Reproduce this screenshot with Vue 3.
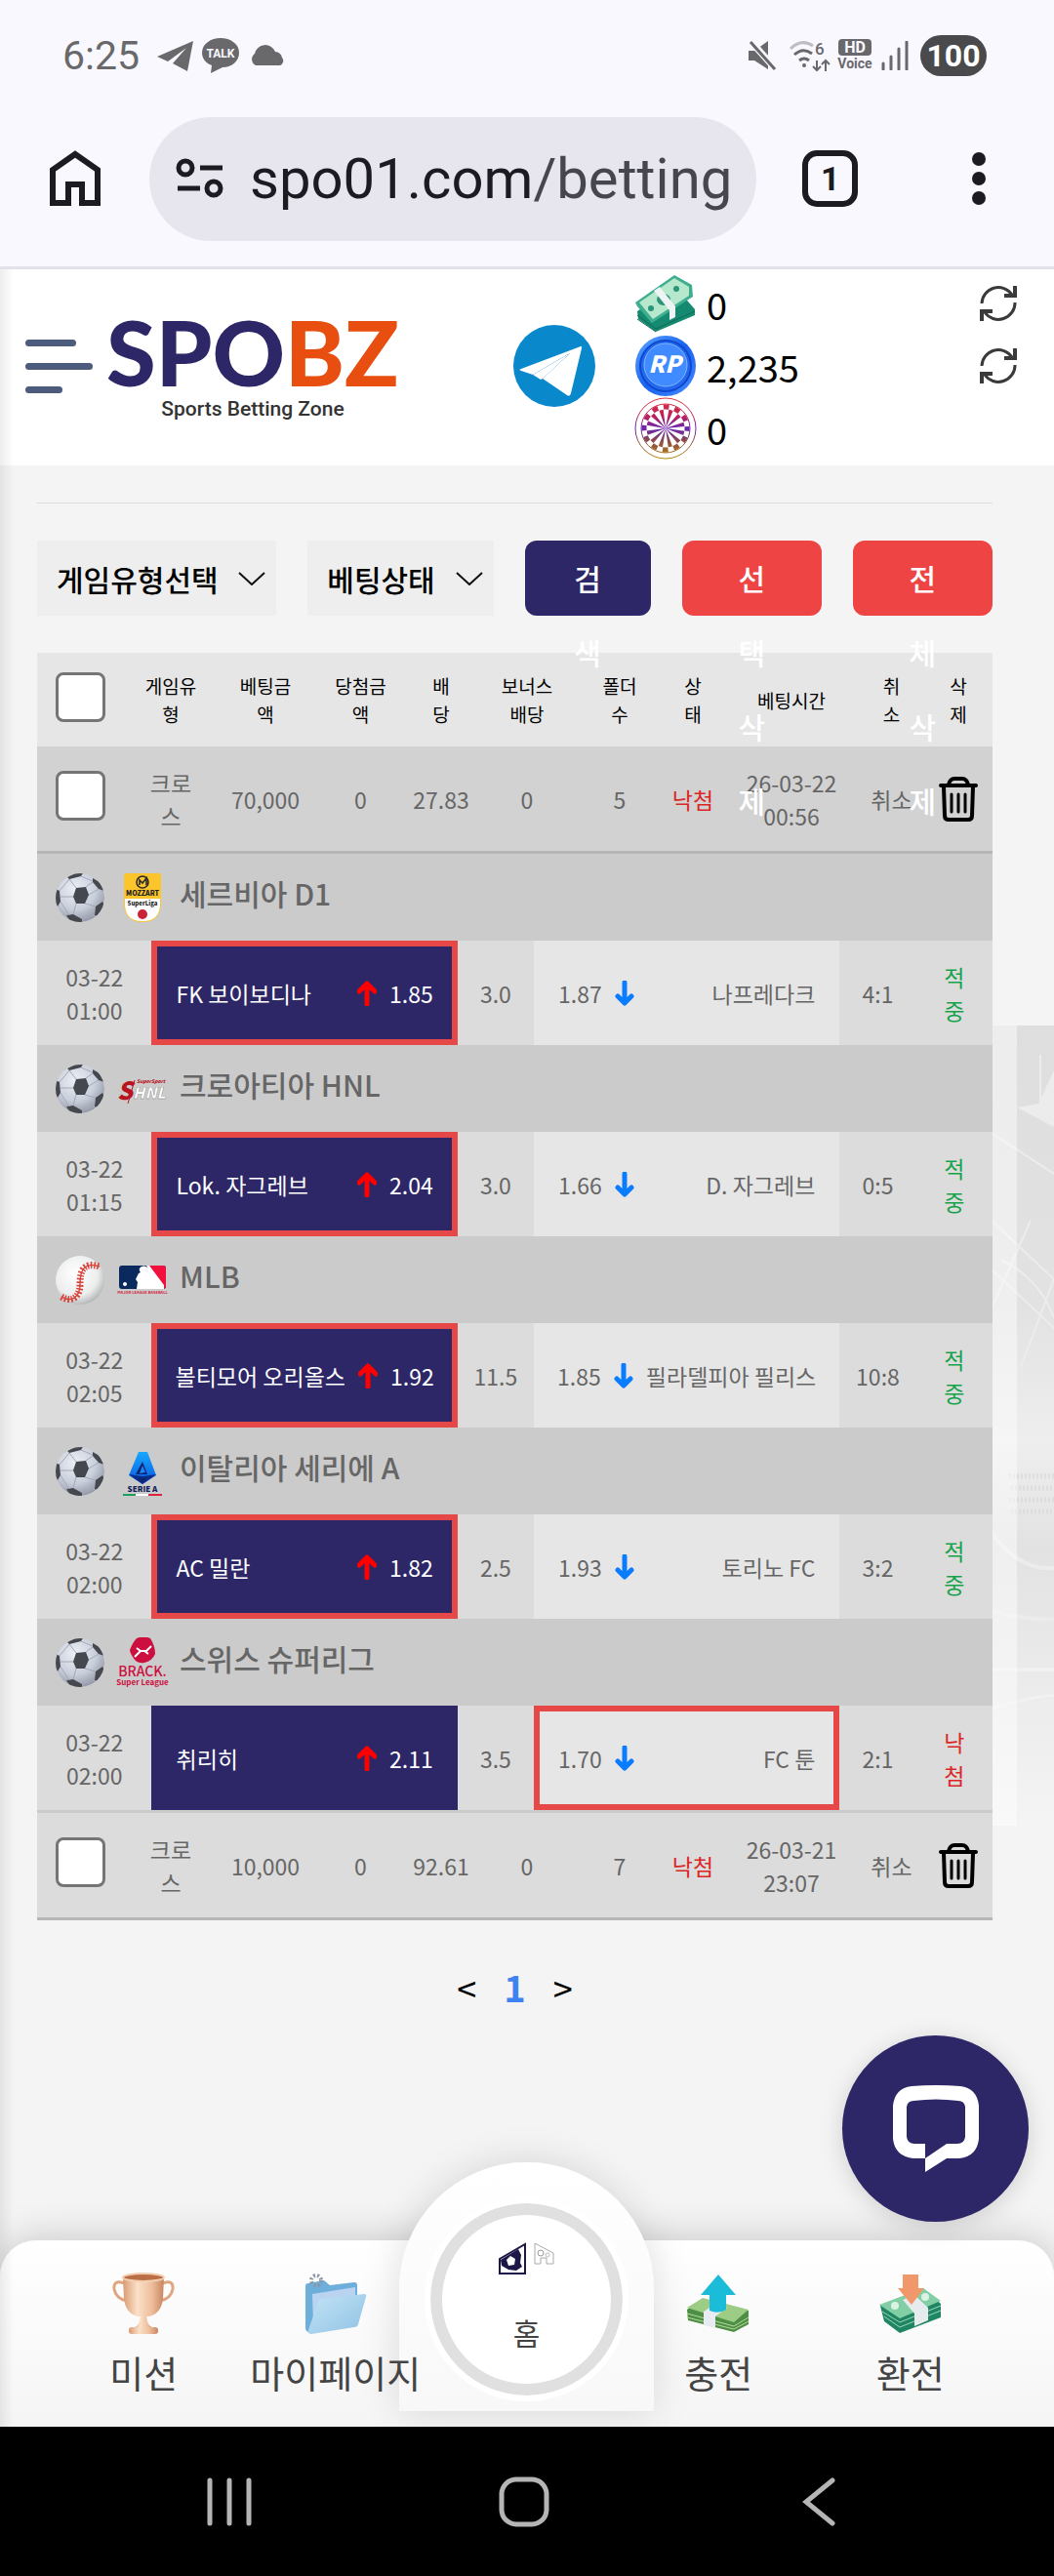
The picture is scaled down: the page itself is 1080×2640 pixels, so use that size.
<template>
  <div class="page">
    <!-- shared symbols -->
    <svg class="defs" aria-hidden="true">
      <defs>
        <radialGradient id="g-ball" cx="40%" cy="32%" r="70%">
          <stop offset="0" stop-color="#eceff6" />
          <stop offset="0.6" stop-color="#c9cfdb" />
          <stop offset="1" stop-color="#9298a5" />
        </radialGradient>
        <radialGradient id="g-base" cx="42%" cy="38%" r="68%">
          <stop offset="0" stop-color="#ffffff" />
          <stop offset="0.65" stop-color="#eceeed" />
          <stop offset="1" stop-color="#a9adad" />
        </radialGradient>
        <linearGradient id="g-serie" x1="0" y1="0" x2="0" y2="1">
          <stop offset="0" stop-color="#18a8ff" />
          <stop offset="1" stop-color="#0a57e0" />
        </linearGradient>
        <linearGradient id="g-rp" x1="0" y1="0" x2="1" y2="1">
          <stop offset="0" stop-color="#5da9ff" />
          <stop offset="0.5" stop-color="#1762f0" />
          <stop offset="1" stop-color="#4a8bff" />
        </linearGradient>
        <linearGradient id="g-wheel" gradientUnits="userSpaceOnUse" x1="0" y1="0" x2="0" y2="64">
          <stop offset="0" stop-color="#e0353c" />
          <stop offset="0.3" stop-color="#bf2158" />
          <stop offset="0.5" stop-color="#6a24b4" />
          <stop offset="0.7" stop-color="#8c4a48" />
          <stop offset="1" stop-color="#b98a08" />
        </linearGradient>
        <linearGradient id="g-cup" x1="0" y1="0" x2="1" y2="0">
          <stop offset="0" stop-color="#d99a72" />
          <stop offset="0.35" stop-color="#fbe0c8" />
          <stop offset="0.7" stop-color="#eebf9d" />
          <stop offset="1" stop-color="#c98560" />
        </linearGradient>
        <linearGradient id="g-folder" x1="0" y1="0" x2="1" y2="1">
          <stop offset="0" stop-color="#c4e4f6" />
          <stop offset="1" stop-color="#8fc2e4" />
        </linearGradient>
      </defs>

      <symbol id="i-soccer" viewBox="0 0 50 50">
        <clipPath id="c-ball"><circle cx="25" cy="25" r="25" /></clipPath>
        <g clip-path="url(#c-ball)">
          <circle cx="25" cy="25" r="25" fill="url(#g-ball)" />
          <g fill="#45484f">
            <path d="M18 24 21 15 31 14 34 22 30 31 21 31z" />
            <path d="M12 4 20 0h8l-2 3-12 3z" />
            <path d="M0 16l4 2 1 11-3 5-3-4z" />
            <path d="M38 5l7 4 5 9-6-2-6-7z" />
            <path d="M48 29l2 4-5 11-5-1 1-9z" />
            <path d="M11 43l7-1 9 5v4H16z" />
          </g>
          <g fill="none" stroke="#a3a9b6" stroke-width="1">
            <path d="M18 24H5M21 15l-7-9M31 14l7-5M34 22l10-6M30 31l11 3M21 31l-3 11M27 47l13-4M4 18 14 6M5 29l9 14M26 3l12 5" />
          </g>
        </g>
      </symbol>

      <symbol id="i-baseball" viewBox="0 0 50 50">
        <circle cx="25" cy="25" r="25" fill="url(#g-base)" />
        <path d="M6 42c10 6 19 1 19-13 0-14 4-23 20-18" fill="none" stroke="#d8433c" stroke-width="7" stroke-dasharray="1.6 1.8" />
        <path d="M6 42c10 6 19 1 19-13 0-14 4-23 20-18" fill="none" stroke="#d8433c" stroke-width="1.4" />
      </symbol>

      <symbol id="i-up" viewBox="0 0 20 26">
        <path d="M10 24V4M2 11l8-8 8 8" fill="none" stroke="currentColor" stroke-width="5" stroke-linecap="round" stroke-linejoin="round" />
      </symbol>
      <symbol id="i-down" viewBox="0 0 20 26">
        <path d="M10 2v20M3 16l7 7 7-7" fill="none" stroke="currentColor" stroke-width="5" stroke-linecap="round" stroke-linejoin="round" />
      </symbol>

      <symbol id="i-trash" viewBox="0 0 40 46">
        <g fill="none" stroke="#000" stroke-width="4" stroke-linecap="round" stroke-linejoin="round">
          <path d="M2 9h36M10 8c1-4 3-6 6-6h8c3 0 5 2 6 6M5 10l1 30q0 4 4 4h20q4 0 4-4l1-30" />
          <path d="M13 18v18M20 18v18M27 18v18" stroke-width="3" />
        </g>
      </symbol>

      <symbol id="i-refresh" viewBox="0 0 38 38">
        <g fill="none" stroke="#3a3a3a" stroke-width="3">
          <path d="M2 19A17 17 0 0 1 33 10M36 18A17 17 0 0 1 5 28" />
          <path d="M36 1v10H25M2 37V27h11" stroke-width="4" />
        </g>
      </symbol>

      <symbol id="i-chevron" viewBox="0 0 28 14">
        <path d="M1 1l13 12L27 1" fill="none" stroke="#111" stroke-width="2" />
      </symbol>
    </svg>

    <div class="status">
      <span class="clock">6:25</span>
      <svg class="st-plane" viewBox="0 0 38 32" aria-hidden="true">
        <path d="M37 1 0 17l11 5L30 8 16 24l15 8z" fill="#69696b" />
      </svg>
      <svg class="st-talk" viewBox="0 0 38 36" aria-hidden="true">
        <path d="M19 0c10 0 19 6 19 15s-8 15-17 15l-12 6 1-8C4 26 0 21 0 15 0 6 9 0 19 0z" fill="#69696b" />
        <text x="19" y="20" font-size="12" font-weight="700" text-anchor="middle" fill="#f9f8ff">TALK</text>
      </svg>
      <svg class="st-cloud" viewBox="0 0 38 22" aria-hidden="true">
        <path d="M7 21a7 7 0 0 1-1-12 11 11 0 0 1 21-2 7 7 0 0 1 7 6 5 5 0 0 1-2 8z" fill="#69696b" />
      </svg>
      <span class="spacer"></span>
      <svg class="st-mute" viewBox="0 0 30 32" aria-hidden="true">
        <path d="M1 11h6L21 1v29L7 21H1z" fill="#69696b" />
        <path d="M3 1l26 29" stroke="#f9f8ff" stroke-width="7" />
        <path d="M3 2l25 28" stroke="#69696b" stroke-width="3" />
      </svg>
      <svg class="st-wifi" viewBox="0 0 42 34" aria-hidden="true">
        <g fill="none" stroke="#69696b" stroke-width="3">
          <path d="M1 10Q12-1 24 7" stroke="#bdbdc2" />
          <path d="M5 16q9-8 18-1M10 22q5-4 10 0" />
          <path d="M28 22v10M24 28l4 4 4-4M37 33V22M33 26l4-4 4 4" stroke-width="2" />
        </g>
        <circle cx="15" cy="27" r="2" fill="#69696b" />
        <text x="26" y="16" font-size="17" font-weight="500" fill="#69696b">6</text>
      </svg>
      <span class="hd"><b>HD</b><i>Voice</i></span>
      <svg class="st-signal" viewBox="0 0 30 30" aria-hidden="true">
        <path d="M2 23v6M10 16v13M18 8v21M26 1v28" stroke="#69696b" stroke-width="3" stroke-linecap="round" />
      </svg>
      <span class="battery">100</span>
    </div>

    <div class="browser">
      <button type="button" class="bare home-btn" aria-label="홈 화면">
        <svg viewBox="0 0 52 58" width="52" height="58">
          <path d="M3 54V20L26 4l23 16v34H33V35H19v19z" fill="none" stroke="#1b1b21" stroke-width="6" />
        </svg>
      </button>
      <button type="button" class="url">
        <svg viewBox="0 0 50 42" width="50" height="42" aria-hidden="true">
          <g fill="none" stroke="#1b1b21" stroke-width="5">
            <circle cx="10" cy="10" r="7" />
            <path d="M25 10h23M2 31h23" />
            <circle cx="39" cy="31" r="7" />
          </g>
        </svg>
        <span>spo01.com<em>/betting</em></span>
      </button>
      <button type="button" class="tab-count">1</button>
      <button type="button" class="bare" aria-label="메뉴">
        <svg viewBox="0 0 16 56" width="16" height="56">
          <g fill="#1b1b21">
            <circle cx="8" cy="8" r="7" />
            <circle cx="8" cy="28" r="7" />
            <circle cx="8" cy="48" r="7" />
          </g>
        </svg>
      </button>
    </div>

    <div class="site">
      <header class="top">
        <button type="button" class="bare burger" aria-label="전체 메뉴">
          <span class="mid"></span><span></span><span class="short"></span>
        </button>
        <a href="#" class="logo">
          <strong>SPO<b>BZ</b></strong>
          <small>Sports Betting Zone</small>
        </a>
        <a href="#" class="telegram" aria-label="텔레그램">
          <svg viewBox="0 0 84 84" width="84" height="84">
            <circle cx="42" cy="42" r="42" fill="#0a88cc" />
            <path d="M69 22 8 45q-3 1 0 2l12 4 38-22-28 26 25 17q3 2 4-2l11-46q0-3-1-2z" fill="#fff" />
            <path d="M20 51l38-22-30 27-1 15z" fill="#0a88cc" />
            <path d="M20 51l8 5 2-1 28-26z" fill="#fff" />
          </svg>
        </a>
        <ul class="balances">
          <li>
            <svg viewBox="0 0 64 60" width="64" height="60" aria-hidden="true">
              <path d="M3 38 41 12l21 24v6L22 59 4 46z" fill="#158a70" />
              <path d="M3 42l19 14 40-18M3 46l19 13" fill="none" stroke="#0d6b57" stroke-width="1" />
              <path d="M1 29 41 1l18 10 1 12-42 27L3 33z" fill="#3fae90" />
              <path d="M5 29l36-25 15 9v9L19 46z" fill="#b6e8cd" />
              <ellipse cx="30" cy="26" rx="7" ry="6" fill="#2c9478" />
              <circle cx="17" cy="35" r="3" fill="#2c9478" />
              <circle cx="43" cy="15" r="3" fill="#2c9478" />
              <path d="M20 17l6-4 16 20v11l-6 3V37z" fill="#eef4f4" />
            </svg>
            <span>0</span>
            <button type="button" class="bare" aria-label="머니 새로고침">
              <svg width="38" height="38"><use href="#i-refresh" /></svg>
            </button>
          </li>
          <li>
            <svg viewBox="0 0 64 64" width="64" height="64" aria-hidden="true">
              <circle cx="32" cy="32" r="31" fill="url(#g-rp)" />
              <circle cx="32" cy="32" r="26" fill="#2368ee" stroke="#0d48cf" stroke-width="2" />
              <circle cx="32" cy="31" r="22" fill="#3f8bff" stroke="#83b6ff" stroke-width="1" />
              <text x="31" y="39" font-size="24" font-weight="900" font-style="italic" text-anchor="middle" fill="#fff">RP</text>
            </svg>
            <span>2,235</span>
            <button type="button" class="bare" aria-label="포인트 새로고침">
              <svg width="38" height="38"><use href="#i-refresh" /></svg>
            </button>
          </li>
          <li>
            <svg viewBox="0 0 64 64" width="64" height="64" aria-hidden="true">
              <g fill="none" stroke="url(#g-wheel)">
                <circle cx="32" cy="32" r="31" stroke-width="1" />
                <circle cx="32" cy="32" r="25" stroke-width="1" />
                <circle cx="32" cy="32" r="22" stroke-width="5" stroke-dasharray="5.76 5.76" stroke-dashoffset="2.88" />
                <circle cx="32" cy="32" r="10" stroke-width="19" stroke-dasharray="2.2 3.036" stroke-dashoffset="-1.5" />
              </g>
            </svg>
            <span>0</span>
          </li>
        </ul>
      </header>

      <main class="content">
        <svg class="stadium" viewBox="0 0 64 820" preserveAspectRatio="none" aria-hidden="true">
          <defs>
            <linearGradient id="g-stad" x1="0" y1="0" x2="0" y2="1">
              <stop offset="0" stop-color="#dedede" />
              <stop offset="0.35" stop-color="#e2e2e2" />
              <stop offset="0.52" stop-color="#eeeeee" />
              <stop offset="0.65" stop-color="#e2e2e2" />
              <stop offset="0.8" stop-color="#eaeaea" />
              <stop offset="1" stop-color="#f4f4f4" />
            </linearGradient>
          </defs>
          <rect width="64" height="820" fill="url(#g-stad)" />
          <path d="M26 84l22-4 16-34v58z" fill="#ececec" />
          <g fill="none" stroke="#ececec" stroke-width="2">
            <path d="M0 110l64 42M10 240Q50 260 64 300M0 250l64 60M0 290l40-90M30 350l34-90M0 200l64 60M50 30v50" />
            <path d="M0 440l64 6M0 520q30 40 64 36M0 600q40 10 64 8" stroke-width="4" />
          </g>
          <g fill="none" stroke="#dddddd">
            <path d="M18 462h46M20 474h44M18 486h46M20 498h44" stroke-width="5" stroke-dasharray="2 2" />
            <path d="M0 660h64M0 700q30-10 64-14" stroke="#f1f1f1" stroke-width="3" />
          </g>
          <rect width="26" height="820" fill="#fff" opacity="0.45" />
        </svg>

        <form class="filters" @submit.prevent>
          <label class="pick">
            <select v-model="gameType" aria-label="게임유형선택">
              <option value="">게임유형선택</option>
              <option value="cross">크로스</option>
            </select>
            <svg width="28" height="14"><use href="#i-chevron" /></svg>
          </label>
          <label class="pick">
            <select v-model="betState" aria-label="베팅상태">
              <option value="">베팅상태</option>
              <option value="lose">낙첨</option>
            </select>
            <svg width="28" height="14"><use href="#i-chevron" /></svg>
          </label>
          <button type="submit" class="btn navy"><span>검색</span></button>
          <button type="button" class="btn red"><span>선택 삭제</span></button>
          <button type="button" class="btn red"><span>전체 삭제</span></button>
        </form>

        <table class="bets">
          <colgroup>
            <col v-for="(w, i) in cols" :key="i" :style="{ width: w + 'px' }" />
          </colgroup>
          <thead>
            <tr>
              <th><input type="checkbox" aria-label="전체 선택" /></th>
              <th v-for="h in heads" :key="h">{{ h }}</th>
            </tr>
          </thead>
          <tbody>
            <template v-for="bet in bets" :key="bet.time">
              <tr class="bet" :class="{ open: bet.games.length }">
                <td><input type="checkbox" :aria-label="bet.amount + ' 선택'" /></td>
                <td>{{ '크로\n스' }}</td>
                <td>{{ bet.amount }}</td>
                <td>0</td>
                <td>{{ bet.odds }}</td>
                <td>0</td>
                <td>{{ bet.folders }}</td>
                <td class="lose">낙첨</td>
                <td>{{ bet.time }}</td>
                <td>취소</td>
                <td>
                  <button type="button" class="bare" aria-label="삭제">
                    <svg width="40" height="46"><use href="#i-trash" /></svg>
                  </button>
                </td>
              </tr>
              <tr v-if="bet.games.length">
                <td colspan="11" class="detail">
                  <div v-for="g in bet.games" :key="g.league">
                    <div class="league">
                      <svg width="50" height="50" aria-hidden="true">
                        <use :href="g.badge === 'mlb' ? '#i-baseball' : '#i-soccer'" />
                      </svg>
                      <svg class="badge" viewBox="0 0 54 52" aria-hidden="true">
                        <g v-if="g.badge === 'mozzart'" font-weight="900" text-anchor="middle">
                          <path d="M8 3q0-2 2-2h34q2 0 2 2v28q0 20-19 20T8 31z" fill="#fdc52c" />
                          <path d="M9 27h36v5q0 18-18 18T9 32z" fill="#fff" />
                          <circle cx="27" cy="10" r="6" fill="none" stroke="#2b2b2b" stroke-width="1.6" />
                          <path d="M24 13V8l3 3 4-5v7" fill="none" stroke="#2b2b2b" stroke-width="1.6" />
                          <text x="27" y="24" font-size="7" fill="#222">MOZZART</text>
                          <text x="27" y="34" font-size="6" fill="#222">SuperLiga</text>
                          <circle cx="27" cy="43" r="5" fill="#c92436" />
                        </g>
                        <g v-else-if="g.badge === 'hnl'" font-weight="900" font-style="italic">
                          <text x="1" y="37" font-size="25" fill="#b9141d">S</text>
                          <text x="17" y="36" font-size="16" fill="#fff" stroke="#777" stroke-width="0.4">HNL</text>
                          <text x="21" y="20" font-size="5" fill="#b9141d">SuperSport</text>
                          <path d="M12 41l7-24" stroke="#b9141d" />
                        </g>
                        <g v-else-if="g.badge === 'mlb'">
                          <rect x="3" y="11" width="48" height="24" rx="3" fill="#0a2a5f" />
                          <path d="M33 11h15q3 0 3 3v18q0 3-3 3z" fill="#f2113c" />
                          <path d="M31 11h3l15 20v4H21l1-7-2-3 3-6 2-1q-3-4 1-6 5-2 7 3z" fill="#fff" />
                          <circle cx="9" cy="30" r="2" fill="#fff" />
                          <text x="27" y="40" font-size="4" font-weight="700" text-anchor="middle" fill="#d4213f">MAJOR LEAGUE BASEBALL</text>
                        </g>
                        <g v-else-if="g.badge === 'serie'">
                          <path d="M23 6h9l9 24-14 9-14-9z" fill="url(#g-serie)" />
                          <path d="M13 29l14 2 14-2-14 10z" fill="#0b2c86" />
                          <path d="M27 16l5 13H20zM23 33h8l-4 4z" fill="#0c2470" />
                          <path d="M27 20l3 7-6 1z" fill="#1c86f5" />
                          <text x="27" y="47" font-size="8" font-weight="900" text-anchor="middle" fill="#101c58">SERIE A</text>
                          <path d="M7 50h13" stroke="#1aa05a" stroke-width="2" />
                          <path d="M20 50h13" stroke="#fff" stroke-width="2" />
                          <path d="M33 50h14" stroke="#d7263d" stroke-width="2" />
                        </g>
                        <g v-else>
                          <path d="M21 1q7-3 14 0 5 8 5 16-3 7-11 9-6 1-10-3-5-7-5-10 3-8 7-12z" fill="#cc0f3f" />
                          <path d="M19 20l6-6-4-3M25 14l6 0 5-5M29 14l4 3" fill="none" stroke="#fff" stroke-width="2" />
                          <text x="27" y="40" font-size="14" font-weight="500" text-anchor="middle" fill="#cc0f3f">BRACK.</text>
                          <text x="27" y="49" font-size="8" font-weight="700" text-anchor="middle" fill="#cc0f3f">Super League</text>
                        </g>
                      </svg>
                      <span>{{ g.league }}</span>
                    </div>
                    <div class="match">
                      <div>{{ g.date }}</div>
                      <div class="side home" :class="{ picked: g.pick === 'home' }">
                        <span class="team">{{ g.home }}</span>
                        <svg class="up" width="20" height="26" aria-hidden="true"><use href="#i-up" /></svg>
                        <span>{{ g.homeOdds }}</span>
                      </div>
                      <div>{{ g.line }}</div>
                      <div class="side away" :class="{ picked: g.pick === 'away' }">
                        <span>{{ g.awayOdds }}</span>
                        <svg class="down" width="20" height="26" aria-hidden="true"><use href="#i-down" /></svg>
                        <span class="team">{{ g.away }}</span>
                      </div>
                      <div>{{ g.score }}</div>
                      <div v-if="g.win" class="win">{{ '적\n중' }}</div>
                      <div v-else class="lose">{{ '낙\n첨' }}</div>
                    </div>
                  </div>
                </td>
              </tr>
            </template>
          </tbody>
        </table>

        <nav class="pager" aria-label="페이지">
          <a href="#" aria-label="이전">&lt;</a>
          <a href="#" class="now">1</a>
          <a href="#" aria-label="다음">&gt;</a>
        </nav>
      </main>

      <button type="button" class="bare chat" aria-label="상담">
        <svg viewBox="0 0 90 90" width="90" height="90">
          <path
            fill-rule="evenodd"
            fill="#fff"
            d="M34 75H22Q3 73 1 55V21Q3 3 20 1q25-2 50 0 17 2 19 20v34q-2 18-20 20H56L34 89zM34 60V75L56 60h11q7 0 8-7V22q-1-6-7-6-23-3-46 0-6 0-7 6v31q1 7 8 7z"
          />
        </svg>
      </button>

      <nav class="dock">
        <a href="#">
          <svg viewBox="0 0 64 64" width="64" height="64" aria-hidden="true">
            <path d="M12 11Q1 7 2 17q2 10 13 12M52 11q11-4 10 6-2 10-13 12" fill="none" stroke="#dfa57e" stroke-width="3" />
            <path d="M11 5h42l-1 22q-2 15-14 18H26Q14 42 12 27z" fill="url(#g-cup)" />
            <ellipse cx="32" cy="5" rx="21" ry="4" fill="#bb6d45" stroke="#f3cfb2" stroke-width="2" />
            <path d="M29 44h6l1 6q1 5 7 7H21q6-2 7-7z" fill="url(#g-cup)" />
            <rect x="17" y="56" width="30" height="7" rx="3" fill="url(#g-cup)" />
          </svg>
          <span>미션</span>
        </a>
        <a href="#">
          <svg viewBox="0 0 64 64" width="64" height="64" aria-hidden="true">
            <path d="M1 14q0-3 3-3l16-3 6 5 25-3q3 0 3 3v10L8 60q-6 3-7-3z" fill="#6eaedb" />
            <circle cx="12" cy="8" r="5" fill="none" stroke="#8b97a3" stroke-width="4" stroke-dasharray="2 2" />
            <path d="M8 22l44-7v24L9 54z" fill="#b9d3f1" />
            <path d="M14 30q1-3 4-3l43-5q3 0 2 3l-8 28q-1 3-4 3L7 63q-4 0-3-4z" fill="url(#g-folder)" />
          </svg>
          <span>마이페이지</span>
        </a>
        <a href="#" class="home-link">
          <span class="ring">
            <svg viewBox="0 0 58 34" width="58" height="34" aria-hidden="true">
              <path d="M1 32V17L27 2v30z" fill="#fff" stroke="#1d1748" stroke-width="2" />
              <path d="M2 18 20 7l3 6-1 8 2 4-6 4-8-1-7-4z" fill="#1d1748" />
              <path d="M8 18l4-4 5 3-1 6-6 1z" fill="#fff" />
              <path d="M37 1v21h6v-6h6v6h7V11z" fill="none" stroke="#aaa" />
              <circle cx="43" cy="11" r="3" fill="none" stroke="#999" />
              <circle cx="50" cy="13" r="2" fill="none" stroke="#bbb" />
            </svg>
            <span>홈</span>
          </span>
        </a>
        <a href="#">
          <svg viewBox="0 0 64 64" width="64" height="64" aria-hidden="true">
            <path d="M0 38l16-11 47 12v14L48 61 1 49z" fill="#4e8f46" />
            <path d="M0 42l48 13 15-9M0 46l48 12 15-8" fill="none" stroke="#b6db9c" />
            <path d="M0 36l16-10 47 12-15 13z" fill="#9dcc85" />
            <path d="M17 40l12-8 12 4-12 9v12l-12-3z" fill="#e8ecf2" />
            <path d="M32 2 14 23h9v16q9 4 17-1V23h10z" fill="#1bbcd8" />
          </svg>
          <span>충전</span>
        </a>
        <a href="#">
          <svg viewBox="0 0 64 64" width="64" height="64" aria-hidden="true">
            <path d="M1 34l45-17 17 15v14L21 62 5 50z" fill="#1f8563" />
            <path d="M3 40l18 11 42-17M5 45l16 11 42-17" fill="none" stroke="#9ad9b9" />
            <path d="M0 33l45-17 18 13-42 18z" fill="#82cfa6" />
            <path d="M24 28l12-5 14 13v13l-14 6V42z" fill="#e6ebee" />
            <circle cx="16" cy="34" r="4" fill="#d9f3e4" />
            <circle cx="47" cy="25" r="4" fill="#d9f3e4" />
            <path d="M24 2h16v14h6L33 33 19 16h5z" fill="#f0986a" />
          </svg>
          <span>환전</span>
        </a>
      </nav>
    </div>

    <div class="system">
      <button type="button" class="bare" aria-label="최근 앱">
        <svg viewBox="0 0 52 52" width="52" height="52">
          <path d="M6 4v44M26 4v44M46 4v44" stroke="#b5b5b5" stroke-width="5" stroke-linecap="round" />
        </svg>
      </button>
      <button type="button" class="bare" aria-label="홈">
        <svg viewBox="0 0 52 52" width="52" height="52">
          <rect x="3" y="3" width="46" height="46" rx="15" fill="none" stroke="#b5b5b5" stroke-width="5" />
        </svg>
      </button>
      <button type="button" class="bare" aria-label="뒤로">
        <svg viewBox="0 0 52 52" width="52" height="52">
          <path d="M40 4 13 26l27 22" fill="none" stroke="#b5b5b5" stroke-width="5" stroke-linecap="round" />
        </svg>
      </button>
    </div>
  </div>
</template>

<script setup>
import { ref } from 'vue'

const gameType = ref('')
const betState = ref('')

const cols = [91, 92, 102, 93, 72, 104, 86, 64, 138, 67, 70]

const heads = [
  '게임유\n형',
  '베팅금\n액',
  '당첨금\n액',
  '배\n당',
  '보너스\n배당',
  '폴더\n수',
  '상\n태',
  '베팅시간',
  '취\n소',
  '삭\n제',
]

const bets = [
  {
    amount: '70,000',
    odds: '27.83',
    folders: 5,
    time: '26-03-22\n00:56',
    games: [
      {
        league: '세르비아 D1',
        badge: 'mozzart',
        date: '03-22\n01:00',
        home: 'FK 보이보디나',
        homeOdds: '1.85',
        line: '3.0',
        awayOdds: '1.87',
        away: '나프레다크',
        score: '4:1',
        pick: 'home',
        win: true,
      },
      {
        league: '크로아티아 HNL',
        badge: 'hnl',
        date: '03-22\n01:15',
        home: 'Lok. 자그레브',
        homeOdds: '2.04',
        line: '3.0',
        awayOdds: '1.66',
        away: 'D. 자그레브',
        score: '0:5',
        pick: 'home',
        win: true,
      },
      {
        league: 'MLB',
        badge: 'mlb',
        date: '03-22\n02:05',
        home: '볼티모어 오리올스',
        homeOdds: '1.92',
        line: '11.5',
        awayOdds: '1.85',
        away: '필라델피아 필리스',
        score: '10:8',
        pick: 'home',
        win: true,
      },
      {
        league: '이탈리아 세리에 A',
        badge: 'serie',
        date: '03-22\n02:00',
        home: 'AC 밀란',
        homeOdds: '1.82',
        line: '2.5',
        awayOdds: '1.93',
        away: '토리노 FC',
        score: '3:2',
        pick: 'home',
        win: true,
      },
      {
        league: '스위스 슈퍼리그',
        badge: 'brack',
        date: '03-22\n02:00',
        home: '취리히',
        homeOdds: '2.11',
        line: '3.5',
        awayOdds: '1.70',
        away: 'FC 툰',
        score: '2:1',
        pick: 'away',
        win: false,
      },
    ],
  },
  {
    amount: '10,000',
    odds: '92.61',
    folders: 7,
    time: '26-03-21\n23:07',
    games: [],
  },
]
</script>

<style>
body {
  margin: 0;
  background: #f4f4f4;
}
</style>

<style scoped>
* {
  box-sizing: border-box;
}

.page {
  position: relative;
  display: flex;
  flex-direction: column;
  min-height: 100vh;
  font-family: 'Noto Sans CJK KR', sans-serif;
  color: #000;
}
.defs {
  position: absolute;
  width: 0;
  height: 0;
}
svg {
  display: block;
  flex: none;
}
a {
  color: inherit;
  text-decoration: none;
}
button,
select {
  font: inherit;
}
.bare {
  display: block;
  padding: 0;
  border: 0;
  background: none;
}

/* phone status bar */
.status {
  display: flex;
  align-items: center;
  height: 114px;
  padding: 0 69px 0 64px;
  background: #f9f8ff;
  color: #69696b;
  font-family: Roboto, sans-serif;
}
.clock {
  margin-right: 18px;
  font-size: 41px;
}
.st-plane {
  width: 38px;
  margin-right: 8px;
}
.st-talk {
  width: 38px;
  margin-right: 10px;
}
.st-cloud {
  width: 38px;
}
.spacer {
  flex: 1;
}
.st-mute {
  width: 30px;
  margin-right: 13px;
}
.st-wifi {
  width: 42px;
  margin-right: 7px;
}
.hd {
  display: flex;
  flex-direction: column;
  align-items: center;
  width: 36px;
  margin-right: 9px;
}
.hd b {
  width: 34px;
  border-radius: 4px;
  background: #69696b;
  color: #f9f8ff;
  font-size: 16px;
  line-height: 17px;
  text-align: center;
}
.hd i {
  font-size: 14px;
  font-style: normal;
  font-weight: 700;
  line-height: 17px;
}
.st-signal {
  width: 30px;
  margin-right: 10px;
}
.battery {
  width: 68px;
  border-radius: 21px;
  background: #4a4a4c;
  color: #fff;
  font-size: 32px;
  font-weight: 700;
  line-height: 42px;
  text-align: center;
}

/* browser toolbar */
.browser {
  display: flex;
  align-items: center;
  height: 162px;
  padding: 0 69px 21px 51px;
  border-bottom: 3px solid #e3e2ea;
  background: #f9f8ff;
}
.home-btn {
  margin-right: 50px;
}
.url {
  display: flex;
  flex: 1;
  align-items: center;
  gap: 26px;
  height: 127px;
  margin-right: 47px;
  padding: 0 25px 0 27px;
  border: 0;
  border-radius: 64px;
  background: #e7e6ef;
  color: #1b1b21;
  font-family: Roboto, sans-serif;
  font-size: 58px;
  white-space: nowrap;
}
.url em {
  color: #46464f;
  font-style: normal;
}
.tab-count {
  width: 58px;
  height: 58px;
  margin-right: 116px;
  padding: 0;
  border: 6px solid #1b1b21;
  border-radius: 15px;
  background: none;
  color: #1b1b21;
  font-family: Roboto, sans-serif;
  font-size: 34px;
  font-weight: 700;
  line-height: 46px;
}

/* site header */
.site {
  position: relative;
  display: flex;
  flex: 1;
  flex-direction: column;
  background: #f4f4f4;
}
.site::before {
  content: '';
  position: absolute;
  z-index: 1;
  top: 0;
  bottom: 0;
  left: 0;
  width: 14px;
  background: linear-gradient(to right, rgba(0, 0, 0, 0.07), rgba(0, 0, 0, 0));
  pointer-events: none;
}
.top {
  display: grid;
  grid-template-columns: 83px 417px 124px 1fr;
  align-items: center;
  height: 201px;
  padding: 0 38px 3px 26px;
  background: #fff;
}
.burger {
  display: flex;
  flex-direction: column;
  gap: 17px;
  width: 69px;
}
.burger span {
  height: 7px;
  border-radius: 4px;
  background: #4d5b7c;
}
.burger .mid {
  width: 52px;
}
.burger .short {
  width: 38px;
}
.logo {
  display: flex;
  flex-direction: column;
  align-items: center;
  width: 300px;
  font-family: Lato, sans-serif;
  line-height: 1;
}
.logo strong {
  color: #2d2767;
  font-size: 92px;
  font-weight: 900;
  line-height: 88px;
}
.logo b {
  color: #e84e0f;
  font-weight: 900;
}
.logo small {
  color: #333;
  font-family: Roboto, sans-serif;
  font-size: 21px;
  font-weight: 500;
  line-height: 28px;
}
.balances {
  margin: 0;
  padding: 0;
  list-style: none;
}
.balances li {
  display: flex;
  align-items: center;
  gap: 10px;
  height: 64px;
  font-size: 38px;
}
.balances button {
  margin-left: auto;
}

/* filters */
.content {
  position: relative;
  padding: 38px 63px 0 38px;
}
.stadium {
  position: absolute;
  top: 574px;
  right: 0;
  width: 64px;
  height: 820px;
}
.filters {
  position: relative;
  z-index: 2;
  display: grid;
  grid-template-columns: 245fr 190fr 129fr 143fr 143fr;
  gap: 32px;
  padding: 38px 0;
  border-top: 1px solid #dcdcdc;
  font-size: 30px;
  font-weight: 500;
}
.pick {
  display: flex;
  position: relative;
  align-items: center;
}
.pick select {
  width: 100%;
  height: 77px;
  padding: 0 20px;
  border: 0;
  border-radius: 0;
  appearance: none;
  background: #eee;
  color: #000;
}
.pick svg {
  position: absolute;
  right: 11px;
  pointer-events: none;
}
.btn {
  display: flex;
  align-items: flex-start;
  justify-content: center;
  height: 77px;
  padding: 0;
  border: 0;
  border-radius: 12px;
  color: #fff;
  line-height: 76px;
}
.btn span {
  width: 30px;
  word-break: break-all;
}
.navy {
  background: #2d2767;
}
.red {
  background: #ef4444;
}

/* bet history */
.bets {
  position: relative;
  width: 100%;
  border-spacing: 0;
  table-layout: fixed;
  white-space: pre-line;
  text-align: center;
}
.bets th,
.bets td {
  padding: 0;
}
.bets th {
  height: 96px;
  background: #e6e6e6;
  font-size: 19px;
  font-weight: 400;
  line-height: 29px;
}
.bets input {
  display: block;
  width: 51px;
  height: 51px;
  margin: 0 0 6px 19px;
  border: 3px solid #757575;
  border-radius: 8px;
  appearance: none;
  background: #fff;
}
.bet td {
  height: 110px;
  border-bottom: 3px solid #b6b6b6;
  background: #dcdcdc;
  color: #666;
  font-size: 23px;
  line-height: 34px;
}
.bet.open td {
  background: #d2d2d2;
}
.bet button {
  margin: 0 auto;
}
.bets .lose {
  color: #dc2626;
}
.bets .win {
  color: #16a34a;
}
.bets .detail {
  border-bottom: 3px solid #cbcbcb;
  color: #666;
}
.league {
  display: flex;
  align-items: center;
  height: 89px;
  padding-left: 19px;
  background: #cbcbcb;
  font-size: 30px;
  font-weight: 500;
  line-height: 44px;
}
.league .badge {
  width: 54px;
  height: 52px;
  margin: 0 11px 0 12px;
}
.league span {
  padding-bottom: 10px;
}
.match {
  display: grid;
  grid-template-columns: 12% 32% 8% 32% 8% 8%;
  height: 107px;
  background: #dcdcdc;
  font-size: 23px;
  line-height: 34px;
}
.match > div {
  display: flex;
  align-items: center;
  justify-content: center;
}
.match .side {
  gap: 13px;
  padding: 0 25px;
  background: #e6e6e6;
  white-space: nowrap;
}
.match .home {
  background: #2d2767;
  color: #fff;
}
.match .picked {
  box-shadow: inset 0 0 0 6px #e64848;
}
.home .team {
  flex: 1;
  text-align: left;
}
.away .team {
  flex: 1;
  text-align: right;
}
.up {
  color: #f00;
}
.down {
  color: #0a7cff;
}

.pager {
  display: flex;
  align-items: center;
  justify-content: center;
  gap: 28px;
  padding: 40px 0;
  font-size: 36px;
  line-height: 56px;
}
.pager .now {
  color: #3f83f0;
  font-size: 38px;
  font-weight: 700;
}

/* floating chat button */
.chat {
  display: flex;
  position: absolute;
  z-index: 2;
  right: 26px;
  bottom: 210px;
  align-items: center;
  justify-content: center;
  width: 191px;
  height: 191px;
  border-radius: 50%;
  background: #2d2767;
  box-shadow: 0 4px 24px rgba(0, 0, 0, 0.15);
}

/* bottom navigation */
.dock {
  position: relative;
  display: flex;
  height: 191px;
  margin-top: auto;
  padding: 0 49px;
  border-radius: 37px 37px 0 0;
  background: linear-gradient(#fff, #f5f5f5);
  box-shadow: 0 0 40px rgba(0, 0, 0, 0.2);
  color: #444;
}
.dock > a {
  display: flex;
  flex: 1;
  flex-direction: column;
  align-items: center;
  padding-top: 33px;
  font-size: 38px;
  line-height: 56px;
  white-space: nowrap;
}
.dock > a > span {
  position: relative;
  z-index: 2;
  margin-top: 10px;
}
.dock .home-link {
  position: absolute;
  bottom: 16px;
  left: 50%;
  width: 261px;
  height: 255px;
  margin-left: -131px;
  padding-top: 36px;
  border-radius: 130px 130px 0 0;
  background: linear-gradient(#fff, #f8f8f8);
  box-shadow: 0 0 40px rgba(0, 0, 0, 0.13);
}
.dock > a:nth-child(2) {
  margin-right: 196px;
}
.dock .ring {
  display: flex;
  flex-direction: column;
  align-items: center;
  width: 209px;
  height: 209px;
  margin-top: 0;
  padding-top: 40px;
  border: 6px solid #fff;
  border-radius: 50%;
  background: #fff;
  box-shadow: inset 0 0 0 12px #e0e0e0;
  font-size: 30px;
  line-height: 44px;
}
.ring span {
  margin-top: 36px;
}

/* android keys */
.system {
  display: flex;
  align-items: center;
  justify-content: center;
  gap: 250px;
  height: 153px;
  padding-right: 6px;
  background: #000;
}
</style>
